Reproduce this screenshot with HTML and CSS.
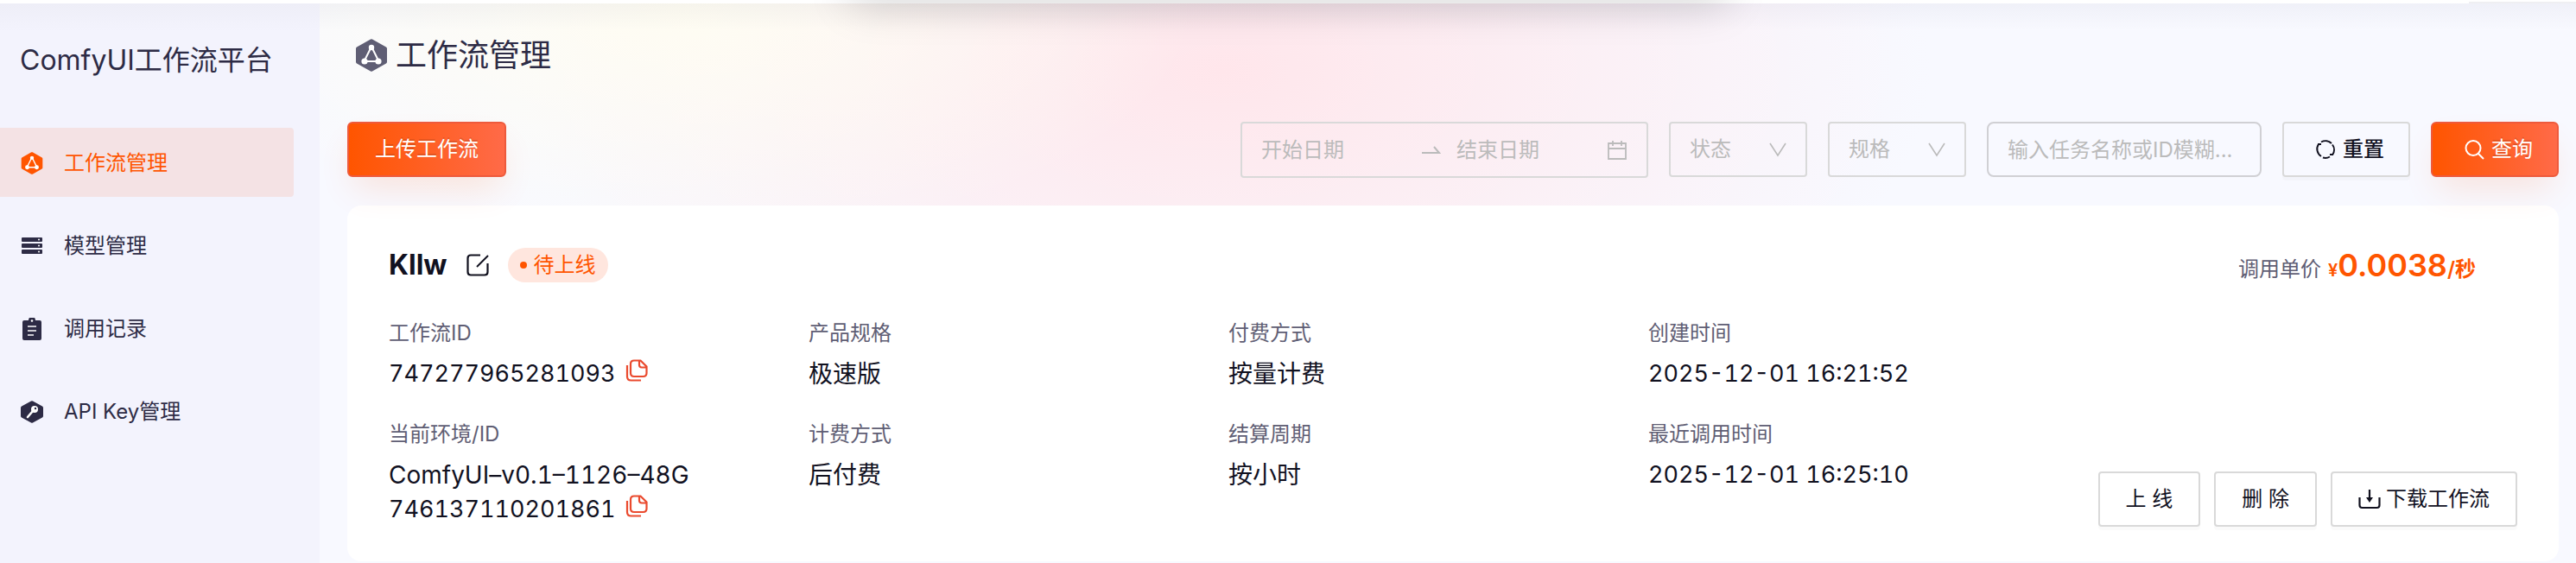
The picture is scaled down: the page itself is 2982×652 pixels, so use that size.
FILE: index.html
```html
<!DOCTYPE html>
<html lang="zh-CN">
<head>
    <meta charset="UTF-8" />
    <title>ComfyUI工作流平台</title>
    <link rel="stylesheet" href="styles.css">
</head>
<body>

<svg class="defs" aria-hidden="true">
    <symbol id="icon-flow" viewBox="0 0 36 38">
        <path fill="currentColor" d="M17 .5q1-.5 2 0l16 9q1 .5 1 2v15q0 1.500-1 2l-16 9q-1 .5-2 0l-16-9q-1-.5-1-2v-15q0-1.500 1-2z"/>
        <path d="M17 11L10 25M19 11l7 14M11 26h14" fill="none" stroke="#fff" stroke-width="2"/>
        <circle cx="18" cy="10" r="3.200" fill="#fff"/>
        <circle cx="10" cy="26" r="3.600" fill="#fff"/>
        <circle cx="26" cy="26" r="3.600" fill="#fff"/>
    </symbol>
    <symbol id="icon-copy" viewBox="0 0 26 26">
        <path d="M10 1.500h7.500l7 7V16q0 4-4 4H10q-4 0-4-4V5.500q0-4 4-4zM16 2v4.500q0 3 3 3h5M2 7v13q0 4.500 4.500 4.500H18" fill="none" stroke="currentColor" stroke-width="2.200"/>
    </symbol>
    <symbol id="icon-down" viewBox="0 0 24 24">
        <path d="M3 5l9 14 9-14" fill="none" stroke="currentColor" stroke-width="1.600"/>
    </symbol>
</svg>

<div class="top-shadow"></div>
<div class="top-line"></div>

<div class="layout">
    <aside class="sidebar">
        <div class="brand">ComfyUI工作流平台</div>
        <nav class="menu">
            <a class="menu-item active" href="#">
                <svg class="menu-icon"><use href="#icon-flow"/></svg>
                工作流管理
            </a>
            <a class="menu-item" href="#">
                <svg class="menu-icon" viewBox="0 0 26 26">
                    <g fill="currentColor">
                        <rect x="1" y="3" width="24" height="5" rx="1"/>
                        <rect x="1" y="10" width="24" height="5" rx="1"/>
                        <rect x="1" y="17" width="24" height="5" rx="1"/>
                    </g>
                    <g fill="#fff">
                        <circle cx="21" cy="5.500" r="1"/>
                        <circle cx="21" cy="12.500" r="1"/>
                        <circle cx="21" cy="19.500" r="1"/>
                    </g>
                </svg>
                模型管理
            </a>
            <a class="menu-item" href="#">
                <svg class="menu-icon" viewBox="0 0 26 26">
                    <path fill="currentColor" d="M4 3h5a4 4 0 0 1 8 0h5q2 0 2 2v19q0 2-2 2H4q-2 0-2-2V5q0-2 2-2z"/>
                    <circle cx="13" cy="3.500" r="1.300" fill="#fff"/>
                    <path d="M8 10h10M8 15h10M8 20h7" stroke="#fff" stroke-width="1.600"/>
                </svg>
                调用记录
            </a>
            <a class="menu-item" href="#">
                <svg class="menu-icon" viewBox="0 0 26 26">
                    <path fill="currentColor" d="M12 .5q1-.5 2 0l11 6q1 .5 1 2v9q0 1.500-1 2l-11 6q-1 .5-2 0l-11-6q-1-.5-1-2v-9q0-1.500 1-2z"/>
                    <path d="M14 12l-6 7" stroke="#fff" stroke-width="2.600" stroke-linecap="round"/>
                    <circle cx="16" cy="10" r="4" fill="#fff"/>
                    <circle cx="17" cy="9" r="1.200" fill="currentColor"/>
                </svg>
                API Key管理
            </a>
        </nav>
    </aside>

    <main class="content">
        <h1 class="page-title">
            <svg class="title-icon"><use href="#icon-flow"/></svg>
            工作流管理
        </h1>

        <div class="toolbar">
            <button class="btn btn-primary" type="button">上传工作流</button>
            <form class="filters">
                <div class="date-range">
                    <input type="text" placeholder="开始日期" aria-label="开始日期">
                    <svg class="range-arrow" viewBox="0 0 24 24"><path d="M2 15h20l-6-7" fill="none" stroke="currentColor" stroke-width="2"/></svg>
                    <input type="text" placeholder="结束日期" aria-label="结束日期">
                    <svg class="icon" viewBox="0 0 24 24"><path d="M2 4h20v18H2zM2 10h20M7 1v6M17 1v6" fill="none" stroke="currentColor" stroke-width="1.800"/></svg>
                </div>
                <div class="select">
                    <select aria-label="状态"><option>状态</option></select>
                    <svg class="icon select-icon"><use href="#icon-down"/></svg>
                </div>
                <div class="select">
                    <select aria-label="规格"><option>规格</option></select>
                    <svg class="icon select-icon"><use href="#icon-down"/></svg>
                </div>
                <input class="search-input" type="text" placeholder="输入任务名称或ID模糊..." aria-label="任务名称或ID">
                <button class="btn btn-ghost" type="button">
                    <svg class="icon" viewBox="0 0 24 24"><path d="M7 20A10 10 0 0 1 4 6M7 3.500A10 10 0 0 1 19 5M20 6.500a10 10 0 0 1 0 12M17 20.500A10 10 0 0 1 9 21.500M3 6h4M21 18h-4" fill="none" stroke="currentColor" stroke-width="2"/></svg>
                    重置
                </button>
                <button class="btn btn-primary" type="button">
                    <svg class="icon" viewBox="0 0 24 24"><circle cx="11" cy="10.500" r="8.500" fill="none" stroke="currentColor" stroke-width="2"/><path d="M17 17l6 6" stroke="currentColor" stroke-width="2"/></svg>
                    查询
                </button>
            </form>
        </div>

        <section class="card">
            <div class="card-head">
                <h2 class="card-name">Kllw</h2>
                <button class="icon-btn" type="button" aria-label="编辑">
                    <svg class="edit-icon" viewBox="0 0 26 26"><path d="M16 1.500H5q-3.500 0-3.500 3.500v16q0 3.500 3.500 3.500h16q3.500 0 3.500-3.500V11" fill="none" stroke="currentColor" stroke-width="2.200"/><path d="M12 15L25 2" stroke="currentColor" stroke-width="2"/></svg>
                </button>
                <span class="status">待上线</span>
                <div class="price">
                    <span class="price-label">调用单价</span>
                    <span class="price-cur">¥</span><span class="price-num">0.0038</span><span class="price-unit">/秒</span>
                </div>
            </div>

            <div class="card-body">
                <dl class="info">
                    <div>
                        <dt>工作流ID</dt>
                        <dd class="num">747277965281093 <button class="icon-btn copy" type="button" aria-label="复制"><svg class="copy-icon"><use href="#icon-copy"/></svg></button></dd>
                    </div>
                    <div>
                        <dt>产品规格</dt>
                        <dd>极速版</dd>
                    </div>
                    <div>
                        <dt>付费方式</dt>
                        <dd>按量计费</dd>
                    </div>
                    <div>
                        <dt>创建时间</dt>
                        <dd class="num">2025-12-01 16:21:52</dd>
                    </div>
                    <div>
                        <dt>当前环境/ID</dt>
                        <dd>ComfyUI–v0.1–1126–48G</dd>
                        <dd class="num">746137110201861 <button class="icon-btn copy" type="button" aria-label="复制"><svg class="copy-icon"><use href="#icon-copy"/></svg></button></dd>
                    </div>
                    <div>
                        <dt>计费方式</dt>
                        <dd>后付费</dd>
                    </div>
                    <div>
                        <dt>结算周期</dt>
                        <dd>按小时</dd>
                    </div>
                    <div>
                        <dt>最近调用时间</dt>
                        <dd class="num">2025-12-01 16:25:10</dd>
                    </div>
                </dl>
                <div class="actions">
                    <button class="btn btn-default" type="button">上 线</button>
                    <button class="btn btn-default" type="button">删 除</button>
                    <button class="btn btn-default btn-download" type="button">
                        <svg class="download-icon" viewBox="0 0 26 26"><path d="M1.500 11v9q0 3 3 3h17q3 0 3-3v-9M13 2v12" fill="none" stroke="currentColor" stroke-width="2.200"/><path d="M9 11h8l-4 6z" fill="currentColor"/></svg>
                        下载工作流
                    </button>
                </div>
            </div>
        </section>
    </main>
</div>

</body>
</html>
```

FILE: styles.css
```css
* {
    box-sizing: border-box;
}

body {
    margin: 0;
    border-top: 4px solid #fff;
    font-family: Inter, "Noto Sans CJK SC", sans-serif;
    font-size: 24px;
    line-height: 1.5;
    color: #11111f;
    background-color: #f8f9ff;
    overflow: hidden;
}

button, input, select {
    font: inherit;
}

.defs {
    position: absolute;
    width: 0;
    height: 0;
}

/* shadow of the panel that hangs above the page */
.top-shadow {
    position: absolute;
    top: -40px;
    left: 33%;
    width: 34%;
    height: 40px;
    box-shadow: 0 4px 50px rgba(0, 0, 0, 0.18);
    pointer-events: none;
}

.top-line {
    position: absolute;
    top: 2px;
    right: 0;
    width: 124px;
    height: 2px;
    background-color: #efeff2;
}

.layout {
    display: flex;
    min-height: 648px;
}

.sidebar {
    width: 370px;
    flex: none;
    padding: 42px 30px 0 0;
    background: linear-gradient(#eeeef7, #f3f3fd 32px);
}

.brand {
    padding-left: 23px;
    font-size: 32px;
    line-height: 48px;
    color: #2d2b45;
}

.menu {
    display: flex;
    flex-direction: column;
    gap: 16px;
    margin-top: 54px;
}

.menu-item {
    display: flex;
    align-items: center;
    gap: 24px;
    height: 80px;
    padding: 2px 0 0 24px;
    border-radius: 0 4px 4px 0;
    color: #2d2b45;
    text-decoration: none;
}

.menu-item.active {
    background-color: #f4e2e4;
    color: #ff5500;
}

.menu-icon {
    width: 26px;
    height: 26px;
}

.content {
    flex: 1;
    padding: 32px 20px 2px 32px;
    background:
        linear-gradient(rgba(30, 30, 80, 0.04), rgba(30, 30, 80, 0) 32px),
        radial-gradient(ellipse 600px 280px at 16% 0, #fffdf2, rgba(255, 253, 242, 0)),
        radial-gradient(ellipse 820px 420px at 40% 12%, #ffe6eb, rgba(255, 230, 235, 0)),
        #f8f9ff;
}

.page-title {
    display: flex;
    align-items: center;
    gap: 10px;
    margin: 0;
    padding-left: 10px;
    font-size: 36px;
    font-weight: 400;
    line-height: 56px;
    color: #2d2b45;
}

.title-icon {
    width: 36px;
    height: 38px;
    color: #5f5e74;
}

.toolbar {
    display: flex;
    justify-content: space-between;
    margin-top: 49px;
}

.filters {
    display: flex;
    gap: 24px;
}

.btn {
    display: flex;
    align-items: center;
    justify-content: center;
    gap: 8px;
    height: 64px;
    padding: 0 30px;
    border: 2px solid #d9d9d9;
    border-radius: 4px;
    color: #11111f;
    white-space: nowrap;
    cursor: pointer;
}

.filters .btn {
    padding: 0 28px 0 36px;
}

.btn-primary {
    border-color: #ee5a3c;
    border-radius: 6px;
    background: linear-gradient(90deg, #ff5500, #ff6a48);
    color: #fff;
    text-shadow: 0 -2px 0 rgba(0, 0, 0, 0.12);
    box-shadow: 0 20px 40px -8px rgba(255, 85, 0, 0.14);
}

.btn-ghost {
    background: transparent;
    font-weight: 500;
    box-shadow: 0 4px 0 rgba(0, 0, 0, 0.02);
}

.btn-default {
    background: #fff;
    box-shadow: 0 4px 0 rgba(0, 0, 0, 0.02);
}

.btn-download {
    gap: 6px;
}

.download-icon {
    width: 26px;
    height: 26px;
}

.icon {
    width: 24px;
    height: 24px;
    flex: none;
}

.date-range {
    display: flex;
    align-items: center;
    width: 472px;
    height: 65px;
    padding: 0 22px;
    border: 2px solid #d9d9d9;
    border-radius: 4px;
    color: #bbb;
}

.date-range input {
    flex: 1;
    min-width: 0;
    padding: 0;
    border: none;
    background: none;
    outline: none;
}

.range-arrow {
    width: 24px;
    height: 24px;
    margin: 0 18px 0 10px;
}

::placeholder {
    color: #bbb;
    opacity: 1;
}

.select {
    position: relative;
    width: 160px;
}

.select select {
    width: 100%;
    height: 64px;
    padding: 0 22px;
    border: 2px solid #d9d9d9;
    border-radius: 4px;
    background: transparent;
    color: #bbb;
    appearance: none;
}

.select-icon {
    position: absolute;
    top: 20px;
    right: 22px;
    color: #bbb;
    pointer-events: none;
}

.search-input {
    width: 318px;
    height: 64px;
    padding: 0 22px;
    border: 2px solid #d0d0d4;
    border-radius: 8px;
    background: transparent;
}

.card {
    margin-top: 32px;
    padding: 40px 48px;
    border-radius: 16px;
    background-color: rgba(255, 255, 255, 0.96);
}

.card-head {
    display: flex;
    align-items: center;
    height: 58px;
}

.card-name {
    margin: 0;
    font-size: 32px;
    font-weight: 700;
}

.icon-btn {
    padding: 0;
    border: none;
    background: none;
    color: inherit;
    line-height: 0;
    cursor: pointer;
}

.edit-icon {
    width: 26px;
    height: 26px;
    margin: 0 22px;
}

.status {
    display: flex;
    align-items: center;
    gap: 8px;
    height: 40px;
    padding: 0 14px;
    border-radius: 20px;
    background-color: #ffe6de;
    color: #ff5500;
}

.status::before {
    content: "";
    width: 8px;
    height: 8px;
    border-radius: 50%;
    background-color: #ff5500;
}

.price {
    display: flex;
    align-items: baseline;
    margin-left: auto;
    margin-right: 48px;
    color: #ff5500;
    font-weight: 600;
}

.price-label {
    margin-right: 8px;
    font-weight: 400;
    color: #5f5e74;
}

.price-cur {
    font-size: 20px;
}

.price-num {
    font-size: 36px;
}

.card-body {
    display: flex;
    align-items: flex-end;
    justify-content: space-between;
    margin-top: 30px;
}

.info {
    flex: 1;
    display: grid;
    grid-template-columns: repeat(4, 1fr);
    row-gap: 30px;
    max-width: 1944px;
    margin: 0;
}

.info dt {
    line-height: 40px;
    margin-bottom: 7px;
    color: #5f5e74;
}

.info dd {
    margin: 0;
    font-size: 28px;
    line-height: 40px;
    font-variant-numeric: tabular-nums;
}

.info .num {
    font-size: 27px;
}

.copy {
    margin-left: 4px;
    color: #ea4a2e;
}

.copy-icon {
    width: 26px;
    height: 26px;
}

.actions {
    display: flex;
    flex: none;
    gap: 16px;
}
```
